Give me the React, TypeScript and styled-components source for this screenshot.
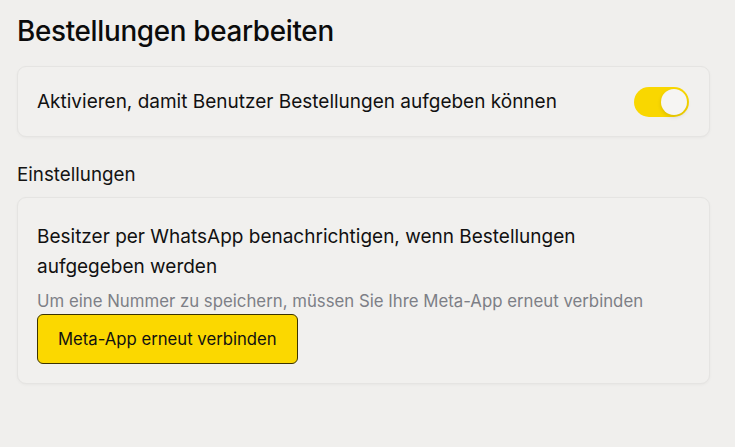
import React, { useState } from "react";
import styled, { createGlobalStyle } from "styled-components";

const Global = createGlobalStyle`
  html, body { margin: 0; padding: 0; background: #f0efed; }
  body { font-family: Inter, "Noto Sans", Arial, sans-serif; color: #111; }
  * { box-sizing: border-box; }
`;

const Page = styled.div`
  width: 735px;
  height: 447px;
  padding: 13px 25px 0 17px;
  display: flex;
  flex-direction: column;
`;

const Title = styled.h1`
  margin: 0 0 17px 0;
  font-size: 27.8px;
  font-weight: 500;
  line-height: 36px;
  letter-spacing: -0.3px;
  color: #0b0b0b;
`;

const Card = styled.div<{ $pad: string }>`
  background: #f1f0ee;
  border: 1px solid #e5e4e2;
  border-radius: 9px;
  box-shadow: 0 1px 3px rgba(0, 0, 0, 0.04);
  padding: ${(p) => p.$pad};
`;

const Row = styled.div`
  display: flex;
  align-items: center;
  justify-content: space-between;
`;

const Label = styled.div`
  font-size: 19px;
  line-height: 30px;
  color: #111;
`;

const Section = styled.div`
  margin-top: 25px;
  margin-bottom: 9px;
  font-size: 18.8px;
  line-height: 26px;
  color: #141414;
`;

const Hint = styled.div`
  font-size: 16.8px;
  line-height: 22px;
  color: #7d7f86;
  margin-top: 8px;
`;

const Button = styled.button`
  margin-top: 2px;
  height: 50px;
  padding: 0 20px;
  background: #fbd800;
  border: 1px solid #3b3300;
  border-radius: 6px;
  font-family: inherit;
  font-size: 16.7px;
  color: #111;
  cursor: pointer;
`;

const Track = styled.button<{ $on: boolean }>`
  position: relative;
  width: 55px;
  height: 30px;
  border: none;
  border-radius: 15px;
  padding: 0;
  background: ${(p) => (p.$on ? "#f9d700" : "#ccc")};
  cursor: pointer;
  flex-shrink: 0;
  margin-right: 1px;
`;

const Knob = styled.span<{ $on: boolean }>`
  position: absolute;
  top: 2px;
  left: ${(p) => (p.$on ? "27px" : "2px")};
  width: 26px;
  height: 26px;
  border-radius: 50%;
  background: #f6f5f3;
  box-shadow: 0 2px 4px rgba(0, 0, 0, 0.12);
`;

export default function App() {
  const [on, setOn] = useState(true);
  return (
    <>
      <Global />
      <Page>
        <Title>Bestellungen bearbeiten</Title>
        <Card $pad="20px 19px 19px 19px">
          <Row>
            <Label>Aktivieren, damit Benutzer Bestellungen aufgeben können</Label>
            <Track $on={on} onClick={() => setOn(!on)}>
              <Knob $on={on} />
            </Track>
          </Row>
        </Card>
        <Section>Einstellungen</Section>
        <Card $pad="24px 19px 19px 19px">
          <Label>
            Besitzer per WhatsApp benachrichtigen, wenn Bestellungen
            <br />
            aufgegeben werden
          </Label>
          <Hint>Um eine Nummer zu speichern, müssen Sie Ihre Meta-App erneut verbinden</Hint>
          <Button>Meta-App erneut verbinden</Button>
        </Card>
      </Page>
    </>
  );
}
